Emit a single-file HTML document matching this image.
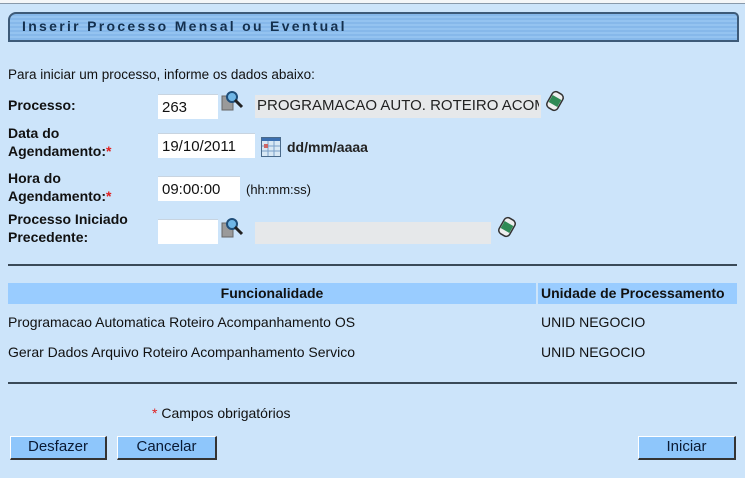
<!DOCTYPE html>
<html><head><meta charset="utf-8"><style>
*{margin:0;padding:0;box-sizing:border-box}
body{width:745px;height:478px;background:#cce4fa;position:relative;overflow:hidden;font-family:"Liberation Sans",sans-serif;color:#111}
.a{position:absolute;white-space:nowrap}
.b{font-weight:bold;font-size:14px;line-height:18px}
.t{font-size:13.5px}
.in{position:absolute;background:#fff;border-top:1px solid #c8d4e0;font-size:15px;padding:4px 0 0 4px}
.gr{position:absolute;background:#e6e8ea}
.btn{position:absolute;background:#8ec6fb;border:1px solid #5e8fbf;border-right:2px solid #333;border-bottom:2px solid #333;border-top-color:#fff;border-left-color:#fff;font-size:15px;text-align:center;line-height:20px;color:#0a1a33}
.req{color:#e02020}
</style></head><body>
<div class="a" style="left:0;top:0;width:745px;height:4px;background:#f4f6f8;border-bottom:1px solid #8899aa"></div>
<div class="a" style="left:8px;top:12px;width:731px;height:30px;border:2px solid #3d5a78;border-radius:8px 5px 0 0;background:repeating-linear-gradient(#86b8ea 0 2px,#94c3f0 2px 4px)"></div>
<div class="a" style="left:22px;top:16px;font-size:14px;letter-spacing:2.3px;color:#14304e;line-height:20px;font-weight:bold">Inserir Processo Mensal ou Eventual</div>
<div class="a t" style="left:8px;top:67px">Para iniciar um processo, informe os dados abaixo:</div>
<div class="a b" style="left:8px;top:96px">Processo:</div>
<div class="in" style="left:158px;top:94px;width:60px;height:25px">263</div>
<svg class="a" style="left:221px;top:89px" width="24" height="24" viewBox="0 0 24 24"><rect x="1" y="7" width="11" height="14" fill="#9a9a9a" stroke="#666"/><circle cx="11" cy="8" r="5" fill="#6fb6e6" stroke="#1f4e79" stroke-width="2"/><path d="M14 11l7 7" stroke="#222" stroke-width="3"/></svg>
<div class="gr" style="left:255px;top:95px;width:286px;height:23px"></div>
<div class="a" style="left:257px;top:97px;font-size:15px;width:282px;overflow:hidden;color:#222">PROGRAMACAO AUTO. ROTEIRO ACOMPANHAMENTO</div>
<svg class="a" style="left:544px;top:90px" width="22" height="22" viewBox="0 0 22 22"><g transform="rotate(30 11 11)"><rect x="5" y="2" width="12" height="18" rx="4" fill="#eee" stroke="#333" stroke-width="1.5"/><rect x="6" y="7" width="10" height="8" fill="#2f8a55"/></g></svg>
<div class="a b" style="left:8px;top:124px">Data do<br>Agendamento:<span class="req">*</span></div>
<div class="in" style="left:158px;top:133px;width:97px;height:25px">19/10/2011</div>
<svg class="a" style="left:261px;top:137px" width="20" height="20" viewBox="0 0 20 20"><rect x="0.5" y="0.5" width="19" height="19" fill="#d8e8f4" stroke="#4a6a8a"/><rect x="1" y="1" width="18" height="3" fill="#3b6fb0"/><path d="M1 9h18M1 14h18M7 4v15M13 4v15" stroke="#7aa0c8"/><rect x="3" y="7" width="4" height="4" fill="#c66"/></svg>
<div class="a" style="left:287px;top:139px;font-size:14px;font-weight:bold;color:#222">dd/mm/aaaa</div>
<div class="a b" style="left:8px;top:169px">Hora do<br>Agendamento:<span class="req">*</span></div>
<div class="in" style="left:158px;top:176px;width:82px;height:25px">09:00:00</div>
<div class="a" style="left:246px;top:182px;font-size:13px">(hh:mm:ss)</div>
<div class="a b" style="left:8px;top:210px">Processo Iniciado<br>Precedente:</div>
<div class="in" style="left:158px;top:219px;width:60px;height:25px"></div>
<svg class="a" style="left:221px;top:216px" width="24" height="24" viewBox="0 0 24 24"><rect x="1" y="7" width="11" height="14" fill="#9a9a9a" stroke="#666"/><circle cx="11" cy="8" r="5" fill="#6fb6e6" stroke="#1f4e79" stroke-width="2"/><path d="M14 11l7 7" stroke="#222" stroke-width="3"/></svg>
<div class="gr" style="left:255px;top:222px;width:236px;height:22px"></div>
<svg class="a" style="left:496px;top:216px" width="22" height="22" viewBox="0 0 22 22"><g transform="rotate(30 11 11)"><rect x="5" y="2" width="12" height="18" rx="4" fill="#eee" stroke="#333" stroke-width="1.5"/><rect x="6" y="7" width="10" height="8" fill="#2f8a55"/></g></svg>
<div class="a" style="left:8px;top:264px;width:729px;height:2px;background:#3a4a58"></div>
<div class="a" style="left:8px;top:283px;width:528px;height:21px;background:#99ccff;text-align:center;font-weight:bold;font-size:14px;line-height:21px">Funcionalidade</div>
<div class="a" style="left:538px;top:283px;width:199px;height:21px;background:#99ccff;font-weight:bold;font-size:14px;line-height:21px;padding-left:3px">Unidade de Processamento</div>
<div class="a" style="left:8px;top:314px;font-size:14px">Programacao Automatica Roteiro Acompanhamento OS</div>
<div class="a" style="left:541px;top:314px;font-size:14px">UNID NEGOCIO</div>
<div class="a" style="left:8px;top:344px;font-size:14px">Gerar Dados Arquivo Roteiro Acompanhamento Servico</div>
<div class="a" style="left:541px;top:344px;font-size:14px">UNID NEGOCIO</div>
<div class="a" style="left:8px;top:382px;width:729px;height:2px;background:#3a4a58"></div>
<div class="a" style="left:152px;top:405px;font-size:14px"><span class="req">*</span> Campos obrigatórios</div>
<div class="btn" style="left:10px;top:436px;width:97px;height:24px">Desfazer</div>
<div class="btn" style="left:117px;top:436px;width:100px;height:24px">Cancelar</div>
<div class="btn" style="left:638px;top:436px;width:98px;height:24px">Iniciar</div>
</body></html>
